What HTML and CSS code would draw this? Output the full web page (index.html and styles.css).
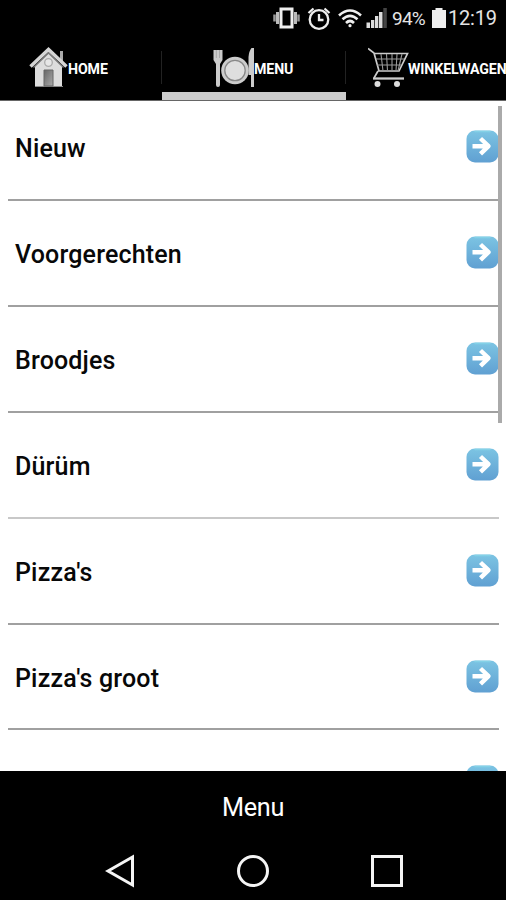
FILE: index.html
```html
<!DOCTYPE html>
<html lang="nl">
<head>
<meta charset="utf-8">
<title>Menu</title>
<link rel="stylesheet" href="styles.css">
</head>
<body>
<svg class="defs" width="0" height="0" aria-hidden="true">
  <defs>
    <linearGradient id="blue" x1="0" y1="0" x2="0" y2="1"><stop offset="0" stop-color="#7cc4e3"/><stop offset="1" stop-color="#60a0d2"/></linearGradient>
    <linearGradient id="door" x1="0" y1="0" x2="1" y2="1"><stop offset="0" stop-color="#666"/><stop offset="1" stop-color="#aaa"/></linearGradient>
    <symbol id="go" viewBox="0 0 33 33">
      <rect x=".5" y=".5" width="32" height="32" rx="8.5" fill="url(#blue)"/>
      <path d="M9 1.5h15" stroke="#83d1e7" stroke-width="1.5" stroke-linecap="round"/>
      <path d="M6.500 16.200h15M14.500 8.500l8 7.700-8 7.700" fill="none" stroke="#fff" stroke-width="4.400" stroke-linejoin="round"/>
    </symbol>
  </defs>
</svg>
<div class="phone">
  <header class="status">
    <svg class="vibrate" width="27" height="22" viewBox="0 0 27 22"><path d="M8 2h11v18H8z" fill="none" stroke="#eee" stroke-width="3"/><path d="M4.500 5v12M22.500 5v12" stroke="#bbb" stroke-width="3"/><path d="M1.500 7.500v7M25.500 7.500v7" stroke="#999" stroke-width="2.500"/></svg>
    <svg class="alarm" width="24" height="23" viewBox="0 0 24 23" fill="none" stroke="#eee" stroke-width="2.300"><circle cx="12" cy="12.500" r="9.300"/><path d="M12 7v6h4.500M1.500 6l5-4.500M22.500 6l-5-4.500"/></svg>
    <svg class="wifi" width="24" height="19" viewBox="0 0 24 19" fill="none" stroke="#eee" stroke-width="2.600"><path d="M1 6.500Q12-3.500 23 6.500M4.500 10.300Q12 3.500 19.500 10.300M8 14Q12 10 16 14"/><circle cx="12" cy="16.700" r="1.600" fill="#eee" stroke="none"/></svg>
    <svg class="signal" width="22" height="20" viewBox="0 0 22 20"><path d="M.5 14.500H4V20H.5zM5 12h3.300v8H5zM9 8h3.300v12H9zM13 4h3.500v16H13z" fill="#ddd"/><path d="M17.300 0h3.500v20h-3.500z" fill="#444"/></svg>
    <span class="percent">94%</span>
    <svg class="battery" width="14" height="20" viewBox="0 0 14 20"><path d="M0 2h3.500V0h7v2H14v18H0z" fill="#eee"/></svg>
    <span class="time">12:19</span>
  </header>
  <nav class="tabs">
    <div class="tab home">
      <svg width="39" height="41" viewBox="0 0 39 41"><path d="M31 4h3v12l-3-3z" fill="#aaa"/><path d="M6 19 20 5l13 14v21H6z" fill="#ddd"/><path d="M6 39.500h28" stroke="#888"/><path d="m1.500 19.500 18-17 18 17" fill="none" stroke="#d5d5d5" stroke-width="3.500"/><path d="m4.500 20.500 15-14.500 15 14.500" fill="none" stroke="#777" stroke-width="1.400"/><circle cx="19.500" cy="15.500" r="3.800" fill="#e6e6e6" stroke="#aaa" stroke-width="1.300"/><path d="M15 23h9v16h-9z" fill="url(#door)" stroke="#666"/></svg>
      <span class="label">HOME</span>
    </div>
    <div class="tab menu active">
      <svg width="42" height="41" viewBox="0 0 42 41"><path d="M.5 3h9v10L7 17v21q0 2-2 2t-2-2V17L.5 13z" fill="#ccc"/><path d="M3.300 3v8M6.500 3v8" stroke="#999" stroke-width=".7"/><circle cx="22" cy="23.500" r="13.800" fill="#ccc"/><circle cx="22" cy="23.500" r="10.200" fill="#dedede" stroke="#888" stroke-width="1.300"/><path d="M41 1v39h-3V28h-2.500V10q.5-6 3-9z" fill="#ccc"/></svg>
      <span class="label">MENU</span>
    </div>
    <div class="tab cart">
      <svg width="41" height="41" viewBox="0 0 41 41" fill="none" stroke="#ccc"><path d="M0 1.500 6 6l5 18h20l8.500-17.500H7M10 24l-4 7" stroke-width="1.700"/><path d="M5 31.500h31" stroke-width="2.300"/><path d="M8 12h28M9 18h24M13 7l2 17M18.500 7l1 17M24 7v17M29 7l-1 17M34 7l-4 17" stroke="#999" stroke-width="1.100"/><circle cx="9.500" cy="37" r="3" fill="#ddd" stroke="none"/><circle cx="29" cy="37" r="3" fill="#ddd" stroke="none"/></svg>
      <span class="label">WINKELWAGEN</span>
    </div>
  </nav>
  <main class="list">
    <div class="row"><span>Nieuw</span><svg class="go"><use href="#go"/></svg></div>
    <div class="row"><span>Voorgerechten</span><svg class="go"><use href="#go"/></svg></div>
    <div class="row"><span>Broodjes</span><svg class="go"><use href="#go"/></svg></div>
    <div class="row light"><span>Dürüm</span><svg class="go"><use href="#go"/></svg></div>
    <div class="row"><span>Pizza's</span><svg class="go"><use href="#go"/></svg></div>
    <div class="row"><span>Pizza's groot</span><svg class="go"><use href="#go"/></svg></div>
    <div class="row"><span></span><svg class="go"><use href="#go"/></svg></div>
    <div class="scrollbar"></div>
  </main>
  <footer class="title">Menu</footer>
  <div class="system">
    <svg width="30" height="34" viewBox="0 0 30 34"><path d="M3 17 27.500 3v28z"/></svg>
    <svg width="34" height="34" viewBox="0 0 34 34"><circle cx="17" cy="17" r="14.500"/></svg>
    <svg width="34" height="34" viewBox="0 0 34 34"><path d="M2.500 2.500h29v29h-29z"/></svg>
  </div>
</div>
</body>
</html>
```
FILE: styles.css
```css
* { box-sizing: border-box; }
body { margin: 0; background: #000; font-family: Roboto, "Liberation Sans", sans-serif; }
svg { display: block; flex: none; }
.defs { position: absolute; }
.phone { display: flex; flex-direction: column; width: 506px; height: 900px; overflow: hidden; background: #000; }
.status { display: flex; align-items: center; justify-content: flex-end; height: 38px; padding: 0 9px 2px 0; color: #e4e4e4; font-size: 19px; }
.alarm { margin-left: 7px; }
.wifi { margin-left: 7px; }
.signal { margin-left: 4px; }
.percent { width: 34px; margin-left: 4px; letter-spacing: -.8px; }
.battery { margin-left: 6px; }
.time { width: 49px; margin-left: 2px; font-size: 20px; letter-spacing: -.2px; }
.tabs { display: grid; grid-template-columns: 162px 184px 160px; height: 63px; border-bottom: 1px solid #666; }
.tab { display: flex; align-items: flex-start; padding-top: 9px; color: #fff; background: linear-gradient(#222, #222) right 13px / 1px 33px no-repeat; }
.home { padding-left: 29px; }
.menu { padding-left: 51px; }
.cart { padding-left: 22px; background: none; }
.active { border-bottom: 8px solid #ccc; }
.label { margin-top: 14px; font-size: 14.2px; line-height: 17px; font-weight: 700; letter-spacing: -.1px; white-space: nowrap; }
.menu .label { margin-left: -1px; }
.cart .label { margin-left: -1px; }
.list { position: relative; height: 670px; overflow: hidden; padding: 0 7px 0 8px; background: #fff; }
.row { display: flex; align-items: flex-start; justify-content: space-between; height: 105.9px; padding: 35px 0 0 7px; border-bottom: 2px solid #a0a0a0; color: #080808; font-size: 25px; line-height: 38px; letter-spacing: .17px; font-weight: 500; }
.row:first-child { height: 100px; padding-top: 29px; }
.row.light { border-color: #c8c8c8; }
.go { width: 33px; height: 33px; }
.scrollbar { position: absolute; top: 5px; right: 4px; width: 4px; height: 317px; background: #aaa; }
.title { height: 71px; padding-top: 2px; color: #fff; font-size: 25.3px; letter-spacing: -.3px; line-height: 70px; text-align: center; }
.system { display: flex; height: 58px; padding: 12px 102px 0 105px; justify-content: space-between; fill: none; stroke: #f5f5f5; stroke-width: 3px; }
```
